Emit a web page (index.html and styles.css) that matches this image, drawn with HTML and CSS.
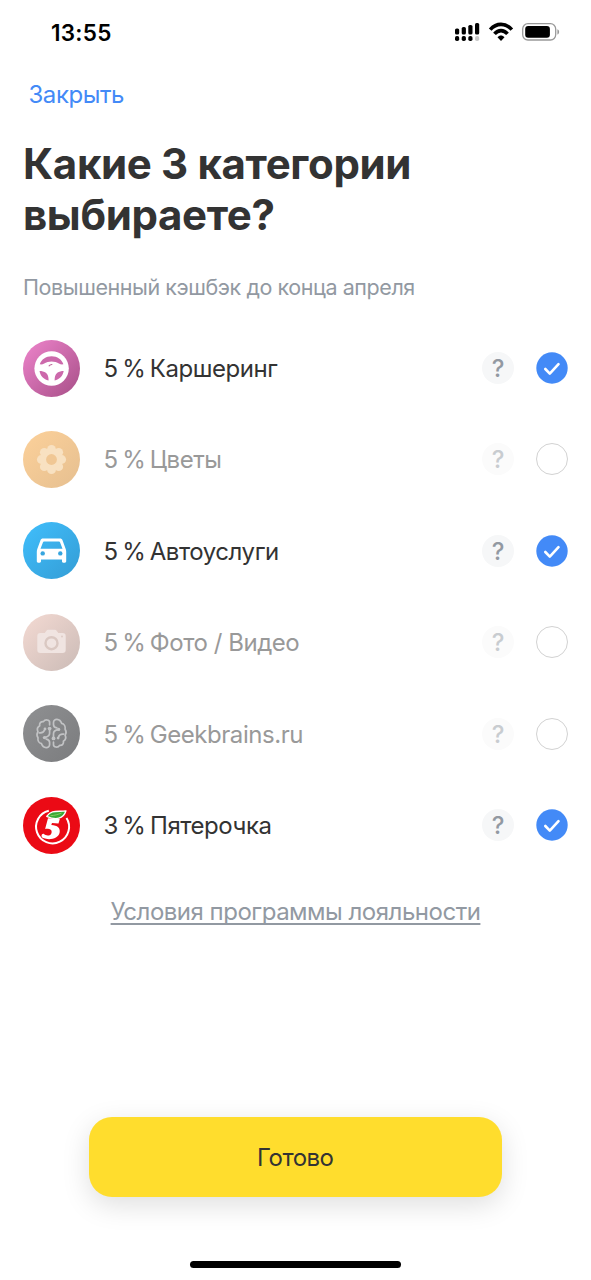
FILE: index.html
```html
<!DOCTYPE html>
<html lang="ru">
<head>
<meta charset="utf-8">
<title>Категории кэшбэка</title>
<link rel="stylesheet" href="styles.css">
</head>
<body>
<div class="screen">
  <header class="status">
    <span class="time">13:55</span>
    <svg class="status-icons" width="106" height="20" viewBox="0 0 106 20">
      <g fill="#000">
        <rect x="0" y="6.5" width="4.2" height="6" rx="1.6"/><rect x="6.7" y="5" width="4.200" height="7.500" rx="1.600"/><rect x="13.300" y="3" width="4.200" height="9.500" rx="1.600"/><rect x="20" y="1" width="4.200" height="11.500" rx="1.600"/>
        <rect x="0" y="14" width="4.200" height="5" rx="1.800"/><rect x="6.700" y="14" width="4.200" height="5" rx="1.800"/><rect x="13.300" y="14" width="4.200" height="5" rx="1.800"/>
      </g>
      <rect x="20" y="14" width="4.200" height="5" rx="1.800" fill="#c9c9c9"/>
      <g fill="none" stroke="#000" stroke-width="3.600"><path d="M35.200 7.600C41.500.6 50.500.6 56.800 7.600"/><path d="M39.500 11.900c3.800-4.400 9.200-4.400 13 0"/></g>
      <path d="M42.500 15.200c2-2.300 5-2.300 7 0L46 18.900z"/>
      <rect x="67.700" y="1.700" width="33" height="16.300" rx="5.200" fill="none" stroke="#999" stroke-width="1.300"/>
      <rect x="70.200" y="4" width="24.700" height="11.700" rx="3"/>
      <path d="M102.400 7.200c2.300.8 2.300 4.500 0 5.400z" fill="#999"/>
    </svg>
  </header>
  <a class="close">Закрыть</a>
  <h1 class="title">Какие 3 категории<br>выбираете?</h1>
  <p class="subtitle">Повышенный кэшбэк до конца апреля</p>
  <ul class="list">
    <li class="row">
      <svg class="icon" viewBox="0 0 57 57">
        <defs><linearGradient id="pink" x1="0" y1="0" x2="1" y2="1"><stop offset=".1" stop-color="#e77fc5"/><stop offset=".9" stop-color="#ae548e"/></linearGradient></defs>
        <circle cx="28.500" cy="28.500" r="28.500" fill="url(#pink)"/>
        <circle cx="28.600" cy="28.500" r="17.200" fill="#fff"/>
        <path fill="#cc69ab" d="M16.800 24.300C18.400 19.300 22.900 16.200 28.600 16.200s10.200 3.100 11.800 8.100c-3.500.6-4.600-1.500-7.800-2.300-2.800-.7-5.200-.7-8 0-3.200.8-4.300 2.900-7.800 2.300zM16.500 31c2.200 0 4.700.5 6.400 1.700 2.200 1.600 2.600 4.300 2.700 7.700-4.900-.9-8.200-4.300-9.100-9.400zM40.700 31c-2.200 0-4.700.5-6.400 1.700-2.200 1.600-2.600 4.300-2.700 7.700 4.900-.9 8.200-4.300 9.100-9.400z"/>
        <path d="M25.800 26.300c.8-1.700 2.200-1.600 3.500-1.800" fill="none" stroke="#bd6699" stroke-width="1.100"/>
      </svg>
      <span class="label"><span class="rate">5 % </span>Каршеринг</span><span class="help">?</span>
      <svg class="check" viewBox="0 0 32 32"><circle cx="16" cy="16" r="15.700" fill="#438af7"/><path d="M9.300 17l4.500 4.600 8.700-9.500" fill="none" stroke="#fff" stroke-width="2.600" stroke-linecap="round" stroke-linejoin="round"/></svg>
    </li>
    <li class="row off">
      <svg class="icon" viewBox="0 0 57 57">
        <defs><linearGradient id="sand" x1="0" y1="0" x2="1" y2="1"><stop offset=".1" stop-color="#facf99"/><stop offset=".9" stop-color="#e8c191"/></linearGradient></defs>
        <circle cx="28.500" cy="28.500" r="28.500" fill="url(#sand)"/>
        <g fill="#f8e1c1"><circle cx="28.500" cy="28.500" r="11"/><circle cx="28.500" cy="18.300" r="4.400"/><circle cx="35.700" cy="21.300" r="4.400"/><circle cx="38.700" cy="28.500" r="4.400"/><circle cx="35.700" cy="35.700" r="4.400"/><circle cx="28.500" cy="38.700" r="4.400"/><circle cx="21.300" cy="35.700" r="4.400"/><circle cx="18.300" cy="28.500" r="4.400"/><circle cx="21.300" cy="21.300" r="4.400"/></g>
        <circle cx="28.500" cy="28.500" r="5.400" fill="#f0c794"/>
      </svg>
      <span class="label"><span class="rate">5 % </span>Цветы</span><span class="help">?</span><span class="radio"></span>
    </li>
    <li class="row">
      <svg class="icon" viewBox="0 0 57 57">
        <defs><linearGradient id="sky" x1="0" y1="0" x2="1" y2="1"><stop offset=".1" stop-color="#3fbbf8"/><stop offset=".9" stop-color="#35a0d9"/></linearGradient></defs>
        <circle cx="28.500" cy="28.500" r="28.500" fill="url(#sky)"/>
        <path fill="#fff" fill-rule="evenodd" d="M20.300 16.500h16.400c1.600 0 2.400.5 2.900 2l3.100 8.500c.4 1 .5 2 .5 3v9.300c0 .9-.5 1.400-1.400 1.400h-1.500c-.9 0-1.300-.5-1.300-1.400v-1.800H18v1.800c0 .9-.5 1.400-1.400 1.400h-1.400c-.9 0-1.400-.5-1.400-1.400V30c0-1 .1-2 .5-3l3.100-8.500c.5-1.500 1.300-2 2.900-2zm.7 3.100c-.5 0-.8.2-1 .7l-2.500 6.500h22l-2.500-6.500c-.2-.5-.5-.7-1-.7z"/>
        <circle cx="19.700" cy="31.400" r="2.200" fill="#36a5df"/><circle cx="37.300" cy="31.400" r="2.200" fill="#36a5df"/>
      </svg>
      <span class="label"><span class="rate">5 % </span>Автоуслуги</span><span class="help">?</span>
      <svg class="check" viewBox="0 0 32 32"><circle cx="16" cy="16" r="15.700" fill="#438af7"/><path d="M9.300 17l4.500 4.600 8.700-9.500" fill="none" stroke="#fff" stroke-width="2.600" stroke-linecap="round" stroke-linejoin="round"/></svg>
    </li>
    <li class="row off">
      <svg class="icon" viewBox="0 0 57 57">
        <defs><linearGradient id="rose" x1="0" y1="0" x2="1" y2="1"><stop offset=".1" stop-color="#f0d7d0"/><stop offset=".9" stop-color="#cfbeb9"/></linearGradient></defs>
        <circle cx="28.500" cy="28.500" r="28.500" fill="url(#rose)"/>
        <path fill="#f0e4e1" d="M17.500 19h4.200l1.900-2.500c.4-.5.800-.7 1.400-.7h7c.6 0 1 .2 1.400.7l1.900 2.500h4.200c2.300 0 3.200 1 3.200 3.200v13.500c0 2.300-1 3.200-3.200 3.200h-22c-2.300 0-3.200-1-3.200-3.200V22.200c0-2.300 1-3.200 3.200-3.200z"/>
        <circle cx="28.500" cy="29.200" r="6" fill="none" stroke="#dac8c2" stroke-width="2.400"/><circle cx="39" cy="22.600" r="1" fill="#dfccc6"/>
      </svg>
      <span class="label"><span class="rate">5 % </span>Фото / Видео</span><span class="help">?</span><span class="radio"></span>
    </li>
    <li class="row off">
      <svg class="icon" viewBox="0 0 57 57">
        <defs><linearGradient id="gray" x1="0" y1="0" x2="1" y2="1"><stop offset=".1" stop-color="#8d8e90"/><stop offset=".9" stop-color="#7d7e80"/></linearGradient></defs>
        <circle cx="28.500" cy="28.500" r="28.500" fill="url(#gray)"/>
        <g fill="none" stroke="#c2c3c5" stroke-width="1.700" stroke-linecap="round" stroke-linejoin="round">
          <path d="M26.600 19.800v-2.600c0-2.400-4.500-3.300-6.100-.5-2.800-.3-4.300 1.500-3.800 4.100-2.400 1.400-2.800 3.800-1.700 6-1.200 1.800-1.200 4.200 0 5.900-.5 3 1 5.500 3.500 6 1.500 4.800 8.100 5.400 8.100.7v-1.800c0-2.200-1.600-3.200-3.300-3.500"/>
          <path d="M30.500 37.200v2.600c0 2.400 4.500 3.300 6.100.5 2.800.3 4.300-1.500 3.800-4.100 2.400-1.400 2.800-3.800 1.700-6 1.200-1.800 1.200-4.200 0-5.900.5-3-1-5.500-3.500-6-1.500-4.800-8.100-5.400-8.100-.7v1.800c0 2.200 1.600 3.200 3.300 3.500"/>
          <path d="M16.500 27.800c2.700.3 4.500-.8 5.200-3M26.600 24.800v3.500c0 2.200-2 3.500-4.300 4M40.600 29.200c-2.700-.3-4.500.8-5.200 3M30.500 32.200v-3.500c0-2.200 2-3.500 4.300-4"/>
        </g>
        <g fill="#c2c3c5"><circle cx="26.600" cy="23.600" r="1.900"/><circle cx="30.500" cy="33.400" r="1.900"/><circle cx="21.500" cy="32.600" r="1.700"/><circle cx="35.600" cy="24.400" r="1.700"/><circle cx="22" cy="23.900" r="1.400"/><circle cx="35.100" cy="33.100" r="1.400"/></g>
      </svg>
      <span class="label"><span class="rate">5 % </span>Geekbrains.ru</span><span class="help">?</span><span class="radio"></span>
    </li>
    <li class="row">
      <svg class="icon" viewBox="0 0 57 57">
        <circle cx="28.500" cy="28.500" r="28.500" fill="#eb0a15"/>
        <path d="M25.800 13.800A16.500 16.500 0 1 0 43.500 21" fill="none" stroke="#fff" stroke-width="2"/>
        <path d="M25 21.200l11.800.8-1.300 4.500-6.500-.5-.7 2c6.200.2 9.300 3.200 8.300 7.700-1.300 5.600-9.300 8-16.500 5.400-2.400-1-1.800-4.700.6-4.300 2 2.300 6.900 2.600 7.800-.8.900-3.500-2-4.500-6.400-4.100z" fill="#fff"/>
        <path d="M23.700 19.300C29 12 35.500 15.300 43 13.800 40.500 22 33 23.500 23.700 19.300z" fill="#39a935" stroke="#fff" stroke-width="1.300" stroke-linejoin="round"/>
        <path d="M27.500 18.700c4-.2 7.500-1.200 11-2.600" fill="none" stroke="#9bcf6d" stroke-width=".8"/>
      </svg>
      <span class="label"><span class="rate">3 % </span>Пятерочка</span><span class="help">?</span>
      <svg class="check" viewBox="0 0 32 32"><circle cx="16" cy="16" r="15.700" fill="#438af7"/><path d="M9.300 17l4.500 4.600 8.700-9.500" fill="none" stroke="#fff" stroke-width="2.600" stroke-linecap="round" stroke-linejoin="round"/></svg>
    </li>
  </ul>
  <a class="terms">Условия программы лояльности</a>
  <button class="done">Готово</button>
  <div class="home"></div>
</div>
</body>
</html>
```
FILE: styles.css
```css
* { box-sizing: border-box; }
body { margin: 0; background: #fff; font-family: Inter, "Liberation Sans", sans-serif; color: #333; }
.screen { width: 591px; height: 1280px; display: flex; flex-direction: column; overflow: hidden; }
.status { height: 64px; padding: 0 30px 0 51px; display: flex; justify-content: space-between; align-items: center; flex: none; }
.time { font-size: 22.5px; font-weight: 600; color: #000; line-height: 30px; padding-top: 2px; letter-spacing: .25px; }
.status-icons { display: block; }
.close { margin: 15px 0 0 28.5px; font-size: 24px; line-height: 32px; color: #438af7; align-self: flex-start; letter-spacing: -.45px; }
.title { margin: 27px 0 0 23px; font-size: 42px; line-height: 51px; font-weight: 700; letter-spacing: -.35px; }
.subtitle { margin: 33px 0 0 23px; font-size: 21.5px; line-height: 28px; color: #9299a2; white-space: nowrap; align-self: flex-start; letter-spacing: -.43px; }
.list { list-style: none; margin: 21.4px 0 0; padding: 0; }
.row { height: 91.4px; padding: 0 23px; display: flex; align-items: center; }
.icon { width: 57px; height: 57px; flex: none; margin-right: 23.5px; }
.label { font-size: 24px; line-height: 32px; white-space: nowrap; padding-top: 2px; letter-spacing: -.45px; }
.rate { word-spacing: -1.8px; }
.off .label { color: #999; }
.help { margin-left: auto; width: 32px; height: 32px; border-radius: 50%; background: #f6f7f8; color: #9299a2; font-size: 24px; line-height: 33px; font-weight: 500; text-align: center; }
.off .help { background: #fbfbfb; color: #c8ccd0; }
.check, .radio { width: 32px; height: 32px; margin-left: 22px; flex: none; }
.radio { border: 1px solid #d2d2d2; border-radius: 50%; }
.terms { align-self: center; margin-top: 25px; font-size: 24px; line-height: 32px; color: #9299a2; text-decoration: underline; text-decoration-thickness: 1.5px; text-underline-offset: 3px; text-decoration-skip-ink: none; white-space: nowrap; letter-spacing: -.49px; }
.done { width: 413.500px; height: 80px; margin: 189px 0 0 88.500px; padding: 2px 0 0; border: 0; border-radius: 23px; background: #ffdd2d; box-shadow: 0 8px 28px rgba(0,0,0,.13); font: 400 24px/78px Inter, "Liberation Sans", sans-serif; letter-spacing: -.5px; color: #333; flex: none; }
.home { width: 211px; height: 7px; margin: 64px 0 0 190px; border-radius: 4px; background: #000; flex: none; }
```
